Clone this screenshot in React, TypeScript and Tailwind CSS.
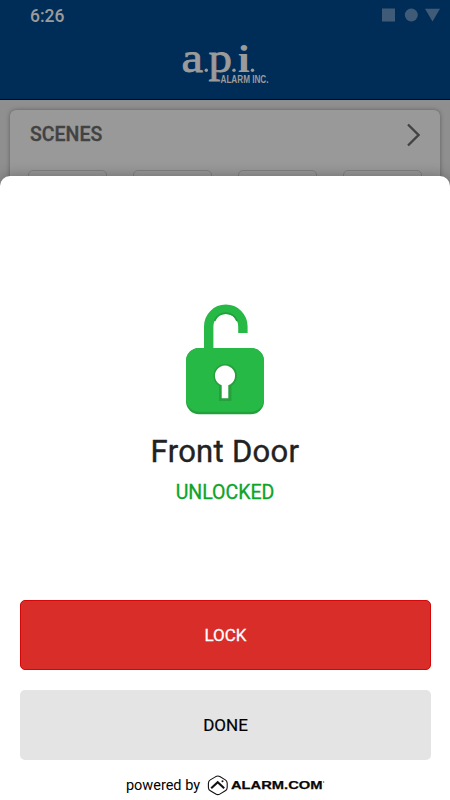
function ApiLogo() {
  return (
    <svg width="94" height="46" viewBox="178 42 94 46" className="block overflow-visible" fill="#9b9b9b" role="img" aria-label="a.p.i. Alarm Inc.">
      <g fontFamily="'Liberation Serif', serif" stroke="#9b9b9b" strokeWidth="0.8">
        <text x="181.5" y="71.5" fontSize="43" textLength="21.5" lengthAdjust="spacingAndGlyphs">a</text>
        <text x="208.5" y="71.5" fontSize="43" textLength="23.5" lengthAdjust="spacingAndGlyphs">p</text>
        <text x="237.8" y="71.7" fontSize="37" fontWeight="700" strokeWidth="0" textLength="12" lengthAdjust="spacingAndGlyphs">i</text>
      </g>
      <circle cx="206.3" cy="70.3" r="1.7" />
      <circle cx="234" cy="70.3" r="1.7" />
      <circle cx="252.5" cy="70.3" r="1.7" />
      <text x="220.5" y="83.4" fontSize="10" fontFamily="'Liberation Sans', sans-serif" fontWeight="700" textLength="48" lengthAdjust="spacingAndGlyphs">ALARM INC.</text>
    </svg>
  );
}

function UnlockedIcon() {
  return (
    <svg width="80" height="112" viewBox="185 304 80 112" className="block">
      <path d="M208.7 350V326.4a17.1 17.1 0 0 1 34.2 0V333" fill="none" stroke="#27b946" strokeWidth="9.4" />
      <path d="M214.5 321a12 12 0 0 1 22.6 0" fill="none" stroke="#22a03c" strokeWidth="1.8" />
      <rect x="186" y="348" width="78" height="66.3" rx="13" fill="#22a03c" />
      <rect x="186" y="348" width="78" height="63.8" rx="13" fill="#27b946" />
      <path d="M219 385.8a11.8 11.8 0 1 1 12.4 0V401H219z" fill="#269f3d" />
      <path d="M221.7 385.2a10.1 10.1 0 1 1 6.6 0V398.2H221.7z" fill="#fff" />
    </svg>
  );
}

function AlarmLogo() {
  return (
    <svg width="120" height="22" viewBox="206 774 120 22" className="block" role="img" aria-label="Alarm.com">
      <path d="M216.8 776.6a4 4 0 0 1 4 0l5.5 3.3a4 4 0 0 1 1.9 3.3v4.3a4 4 0 0 1-1.9 3.3l-5.5 3.3a4 4 0 0 1-4 0l-5.5-3.3a4 4 0 0 1-1.9-3.3v-4.3a4 4 0 0 1 1.9-3.3z" fill="none" stroke="#111" strokeWidth="1.1" />
      <path d="M212.2 788.3l6.5-6 6.5 6" fill="none" stroke="#111" strokeWidth="2.1" />
      <circle cx="223.5" cy="781.3" r="1" fill="#111" />
      <text x="232" y="789.3" fontSize="10.9" fontFamily="'Liberation Sans', sans-serif" fontWeight="700" fill="#080808" stroke="#080808" strokeWidth=".25" textLength="91.5" lengthAdjust="spacingAndGlyphs">ALARM.COM</text>
      <circle cx="324.6" cy="782" r=".7" fill="#555" />
    </svg>
  );
}

export default function App() {
  return (
    <div className="relative h-[800px] w-[450px] overflow-hidden bg-[#8f8f8f] font-['Roboto',sans-serif]">
      <header className="h-[100px] border-b border-[#00004d] bg-[#002d57]">
        <div className="flex h-[30px] items-center justify-between pr-[10px] pl-[30px]">
          <span className="pt-px text-[17.5px] leading-[20px] font-medium text-[#9b9b9b]">6:26</span>
          <svg width="58" height="14" viewBox="382 8 58 14" fill="#405b77" className="block">
            <rect x="382" y="8.5" width="13" height="13" />
            <circle cx="411.3" cy="15" r="6.5" />
            <path d="M425 8.7h15l-7.5 12.7z" />
          </svg>
        </div>
        <div className="flex justify-center pt-3">
          <ApiLogo />
        </div>
      </header>
      <section className="mx-[10px] mt-[10px] h-[100px] rounded-md bg-[#999] shadow-[0_0_4px_rgba(0,0,0,0.35)]">
        <div className="flex h-[60px] items-start justify-between pr-5 pl-5">
          <h2 className="pt-[13px] text-[19.5px] leading-[24px] font-medium text-[#424242] [-webkit-text-stroke:0.3px_#424242]">SCENES</h2>
          <svg width="13" height="24" viewBox="0 0 13 24" fill="none" className="mt-[13px]">
            <path d="M1 1.5L11.5 12 1 22.5" stroke="#424242" strokeWidth="2.3" />
          </svg>
        </div>
        <div className="flex gap-[26px] pl-[18px]">
          <div className="h-10 w-[79px] rounded-[5px] border border-[#828282]" />
          <div className="h-10 w-[79px] rounded-[5px] border border-[#828282]" />
          <div className="h-10 w-[79px] rounded-[5px] border border-[#828282]" />
          <div className="h-10 w-[79px] rounded-[5px] border border-[#828282]" />
        </div>
      </section>
      <div className="absolute inset-x-0 top-[176px] bottom-0 flex flex-col items-center rounded-t-[10px] bg-white pt-32 shadow-[0_0_14px_rgba(0,0,0,0.3)]">
        <UnlockedIcon />
        <h1 className="mt-[17px] text-[31px] leading-[38px] tracking-[0.3px] text-[#222] [-webkit-text-stroke:0.4px_#222]">Front Door</h1>
        <p className="mt-[10px] text-[19.5px] leading-[24px] text-[#0ca526] [-webkit-text-stroke:0.3px_#0ca526]">UNLOCKED</p>
        <div className="mt-[95px] flex w-full flex-col gap-5 pr-[19px] pl-5">
          <button className="h-[70px] rounded-[5px] border border-[#d30707] bg-[#d92d29] pt-[2px] text-[17px] text-white [-webkit-text-stroke:0.3px_white]">LOCK</button>
          <button className="h-[70px] rounded-[5px] bg-[#e4e4e4] pt-[2px] text-[17px] text-black [-webkit-text-stroke:0.2px_black]">DONE</button>
        </div>
        <footer className="mt-[14px] flex items-center gap-[5px] pl-px">
          <span className="pt-px text-[14.5px] leading-5 text-black">powered by</span>
          <AlarmLogo />
        </footer>
      </div>
    </div>
  );
}
